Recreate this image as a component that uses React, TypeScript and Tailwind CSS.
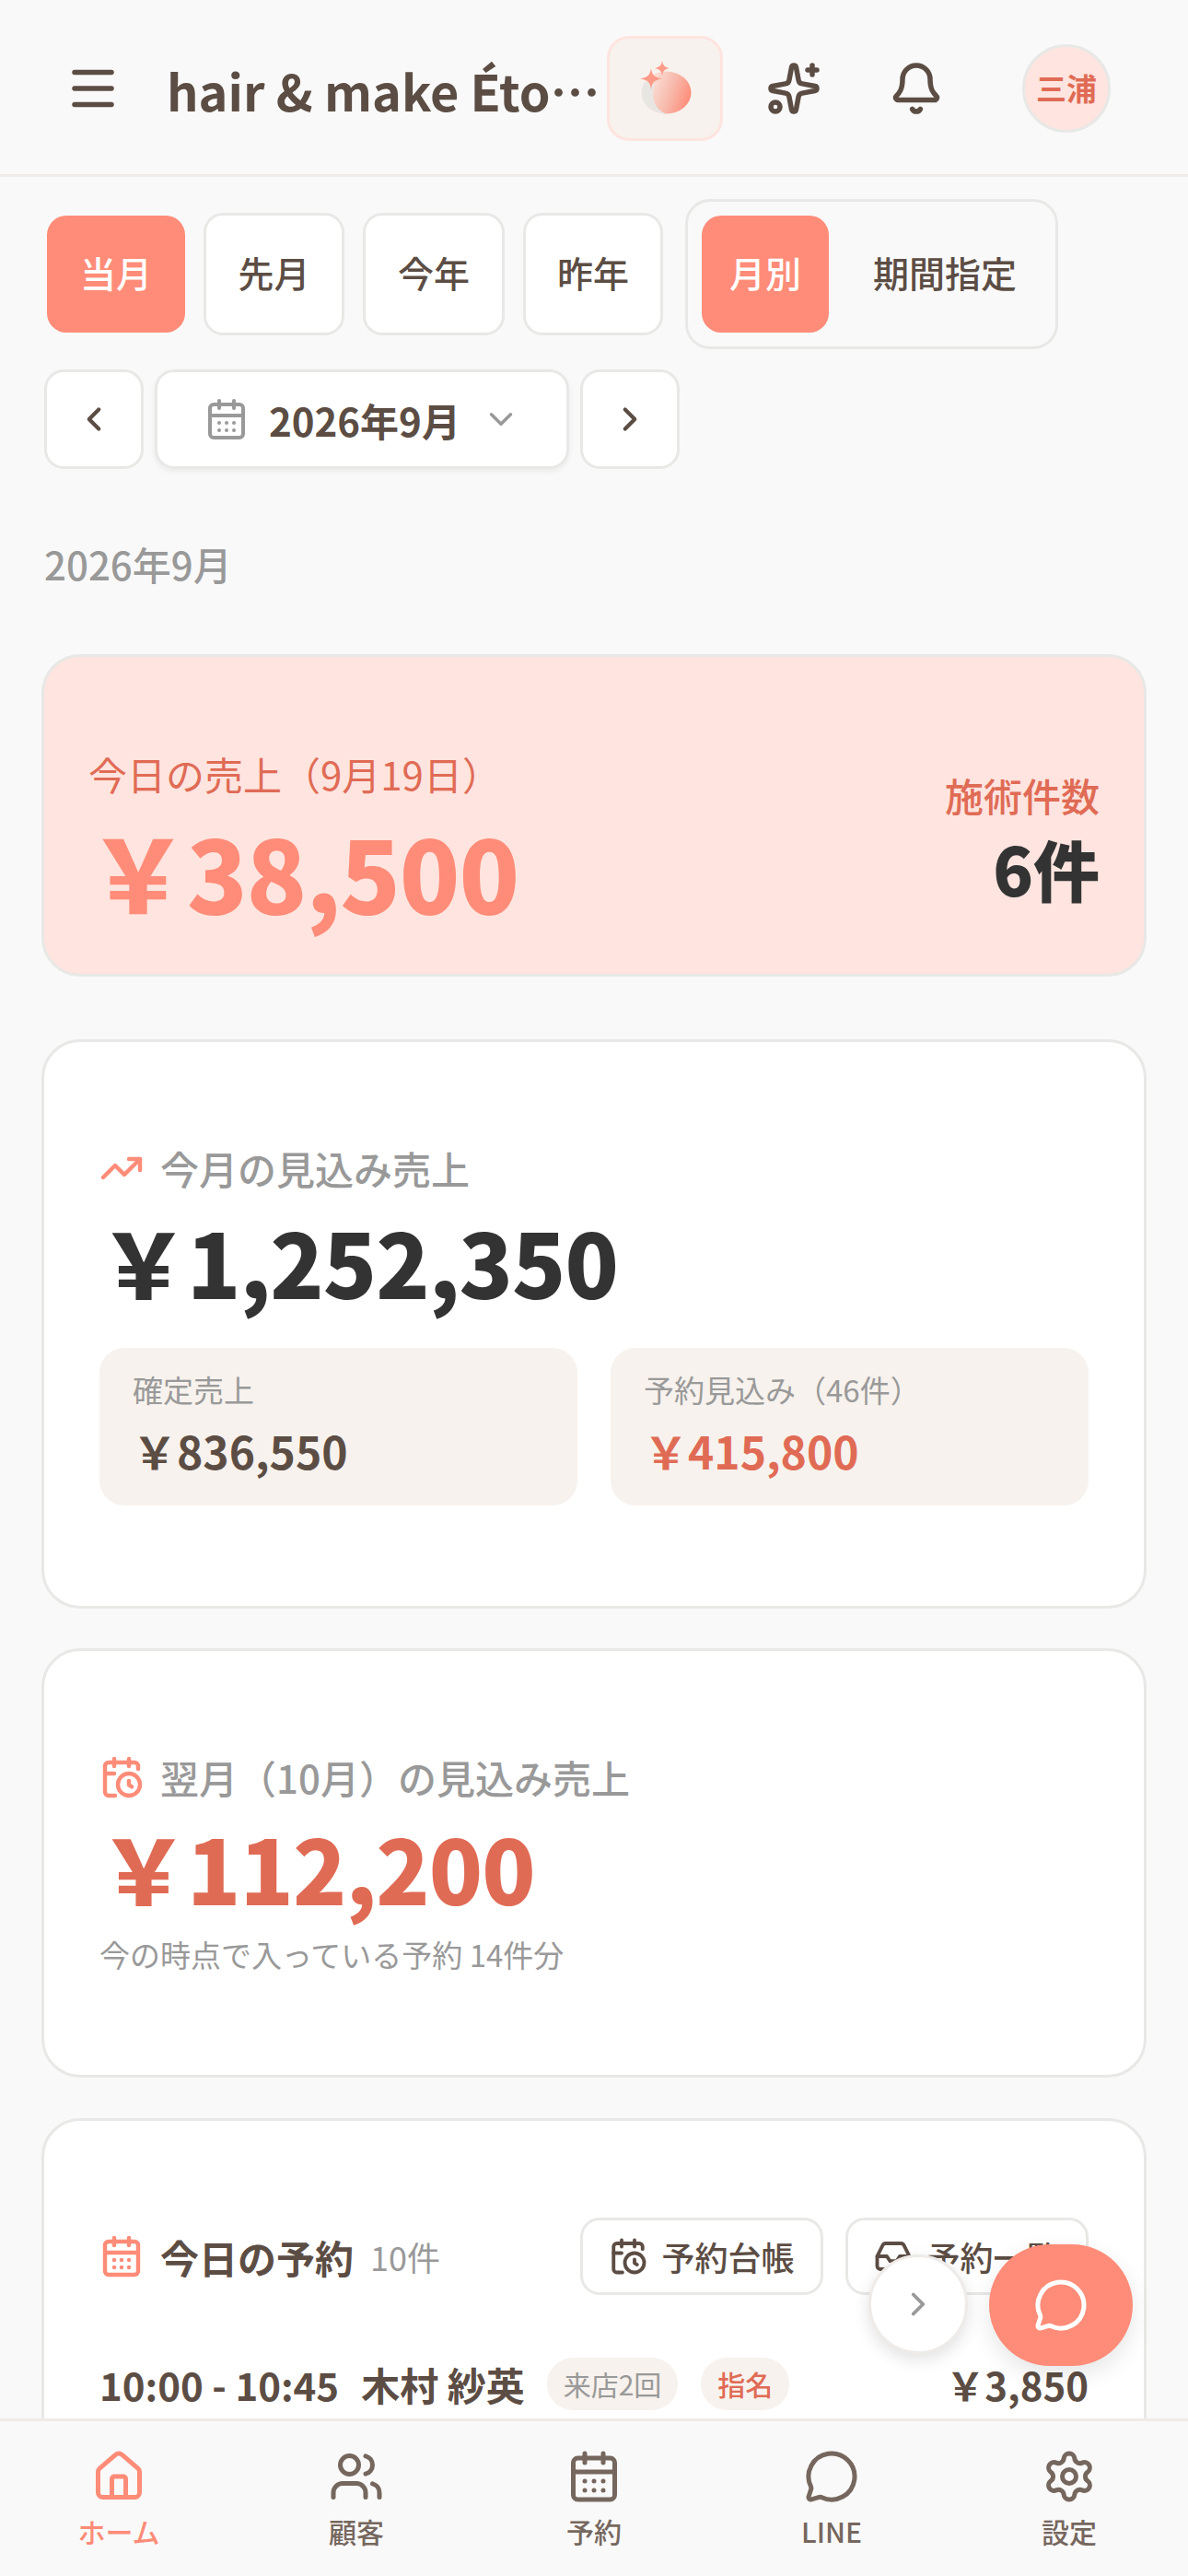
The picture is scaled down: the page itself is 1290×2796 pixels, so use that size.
import { Bell, CalendarClock, CalendarDays, ChevronDown, ChevronLeft, ChevronRight, House, Inbox, Menu, MessageCircle, Settings, Sparkles, TrendingUp, Users } from "lucide-react";

const FONT = "font-['Noto_Sans_CJK_JP','Noto_Sans',sans-serif]";

const quickRanges = [
  { label: "当月", active: true, width: "w-[150px]" },
  { label: "先月", active: false, width: "w-[153px]" },
  { label: "今年", active: false, width: "w-[154px]" },
  { label: "昨年", active: false, width: "w-[152px]" },
];

const navItems = [
  { label: "ホーム", icon: House, active: true },
  { label: "顧客", icon: Users, active: false },
  { label: "予約", icon: CalendarDays, active: false },
  { label: "LINE", icon: MessageCircle, active: false },
  { label: "設定", icon: Settings, active: false },
];

function PeachLogo() {
  return (
    <svg width="60" height="60" viewBox="0 0 60 60">
      <defs>
        <linearGradient id="peach" x1="0" y1="0.3" x2="1" y2="0.6">
          <stop offset="0" stopColor="#fdeee8" />
          <stop offset="0.6" stopColor="#f7b9ab" />
          <stop offset="1" stopColor="#ff8c78" />
        </linearGradient>
      </defs>
      <ellipse cx="31.5" cy="34.5" rx="27" ry="23" fill="url(#peach)" />
      <path d="M9 22a27 23 0 0 0 22.5 35.5C19 53 14 40 19 26z" fill="#e8e6e3" />
      <path d="M15 8c1 7 3 10 12 11.5-9 1.500-11 4-12 12-1-8-3-10.500-12-12 9-1.500 11-4.500 12-11.500z" fill="#ff9a88" />
      <path d="M27 0c1 5 2 6.500 8 8-6 1.500-7 3-8 8-1-5-2-6.500-8-8 6-1.500 7-3 8-8z" fill="#ff9a88" />
    </svg>
  );
}

export default function App() {
  return (
    <div className={`${FONT} relative flex h-[2796px] w-[1290px] flex-col overflow-hidden bg-[#f9f9f9] text-[#5c4d44]`}>
      <header className="flex h-[192px] shrink-0 items-center border-b-[3px] border-[#eeebe8] pt-[2px] pl-[72px]">
        <Menu size={60} strokeWidth={2.2} className="-ml-[1px] shrink-0" />
        <span className="mt-[4px] ml-[50px] w-[472px] truncate text-[54px] leading-[66px] font-bold">hair &amp; make Étoile Salon</span>
        <button className="ml-[6px] flex h-[114px] w-[126px] shrink-0 items-center justify-center rounded-[24px] border-[3px] border-[#ffe4df] bg-[#f7f2ed]">
          <PeachLogo />
        </button>
        <Sparkles size={60} strokeWidth={2.2} className="ml-[47px] shrink-0" />
        <Bell size={60} strokeWidth={2.2} className="ml-[73px] shrink-0" />
        <div className="ml-[85px] flex h-[96px] w-[96px] shrink-0 items-center justify-center rounded-full border-[3px] border-[#e8e8e6] bg-[#ffe4df] text-[33px] font-bold text-[#e06b55]">
          三浦
        </div>
      </header>

      <main className="min-h-0 flex-1 overflow-hidden px-[45px]">
        <div className="mt-[24px] flex items-center">
          <div className="flex items-center gap-[20px] pl-[6px]">
            {quickRanges.map((r) =>
              r.active ? (
                <button key={r.label} className={`flex h-[127px] ${r.width} items-center justify-center rounded-[21px] bg-[#ff8c78] pb-[4px] text-[39px] font-medium text-white`}>
                  {r.label}
                </button>
              ) : (
                <button key={r.label} className={`flex h-[133px] ${r.width} items-center justify-center rounded-[21px] border-[3px] border-[#e8e8e6] bg-white pb-[4px] text-[39px] font-medium`}>
                  {r.label}
                </button>
              ),
            )}
          </div>
          <div className="ml-[24px] flex h-[163px] w-[405px] items-center rounded-[27px] border-[3px] border-[#e8e8e6] pl-[15px]">
            <button className="flex h-[127px] w-[138px] items-center justify-center rounded-[21px] bg-[#ff8c78] pb-[4px] text-[39px] font-medium text-white">月別</button>
            <span className="-mt-[4px] ml-[48px] text-[39px] font-medium">期間指定</span>
          </div>
        </div>

        <div className="mt-[22px] flex items-center gap-[12px] pl-[3px]">
          <button className="flex h-[108px] w-[108px] items-center justify-center rounded-[21px] border-[3px] border-[#e8e8e6] bg-white">
            <ChevronLeft size={42} strokeWidth={2.4} />
          </button>
          <button className="flex h-[108px] w-[450px] items-center rounded-[21px] border-[3px] border-[#e8e8e6] bg-white pl-[51px] shadow-[0_3px_6px_rgba(0,0,0,0.06)]">
            <CalendarDays size={48} strokeWidth={2} className="text-[#999999]" />
            <span className="ml-[22px] text-[42px] font-bold">2026年9月</span>
            <ChevronDown size={42} strokeWidth={2} className="ml-[23px] text-[#999999]" />
          </button>
          <button className="flex h-[108px] w-[108px] items-center justify-center rounded-[21px] border-[3px] border-[#e8e8e6] bg-white">
            <ChevronRight size={42} strokeWidth={2.4} />
          </button>
        </div>

        <p className="mt-[73px] pl-[3px] text-[42px] leading-[60px] font-medium text-[#999999]">2026年9月</p>

        <section className="mt-[68px] flex h-[350px] items-center justify-between rounded-[42px] border-[3px] border-[#e8e8e6] bg-[#ffe4df] px-[48px] pt-[45px]">
          <div>
            <p className="text-[42px] leading-[60px] text-[#e06b55]">今日の売上（9月19日）</p>
            <p className="mt-[15px] text-[108px] leading-[120px] font-black tracking-[-0.01em] text-[#ff8c78]">￥38,500</p>
          </div>
          <div className="mt-[2px] text-right">
            <p className="text-[42px] leading-[60px] font-medium text-[#e06b55]">施術件数</p>
            <p className="mt-[7px] text-[72px] leading-[84px] font-black text-[#333333]">6件</p>
          </div>
        </section>

        <section className="mt-[68px] h-[618px] rounded-[42px] border-[3px] border-[#e8e8e6] bg-white px-[60px] pt-[107px]">
          <div className="flex items-center gap-[18px]">
            <TrendingUp size={48} strokeWidth={2.2} className="text-[#ff8c78]" />
            <p className="text-[42px] leading-[60px] font-medium text-[#999999]">今月の見込み売上</p>
          </div>
          <p className="mt-[17px] text-[96px] leading-[108px] font-black tracking-[-0.01em] text-[#333333]">￥1,252,350</p>
          <div className="mt-[40px] grid grid-cols-2 gap-[36px]">
            <div className="h-[171px] rounded-[27px] bg-[#f7f2ed] px-[36px] pt-[21px]">
              <p className="text-[33px] leading-[48px] text-[#999999]">確定売上</p>
              <p className="mt-[12px] text-[48px] leading-[60px] font-bold">￥836,550</p>
            </div>
            <div className="h-[171px] rounded-[27px] bg-[#f7f2ed] px-[36px] pt-[21px]">
              <p className="text-[33px] leading-[48px] text-[#999999]">予約見込み（46件）</p>
              <p className="mt-[12px] text-[48px] leading-[60px] font-bold text-[#e06b55]">￥415,800</p>
            </div>
          </div>
        </section>

        <section className="mt-[43px] h-[466px] rounded-[42px] border-[3px] border-[#e8e8e6] bg-white px-[60px] pt-[107px]">
          <div className="flex items-center gap-[18px]">
            <CalendarClock size={48} strokeWidth={2.2} className="text-[#ff8c78]" />
            <p className="text-[42px] leading-[60px] font-medium text-[#999999]">翌月（10月）の見込み売上</p>
          </div>
          <p className="mt-[14px] text-[96px] leading-[108px] font-black tracking-[-0.01em] text-[#e06b55]">￥112,200</p>
          <p className="mt-[16px] text-[33px] leading-[48px] text-[#999999]">今の時点で入っている予約 14件分</p>
        </section>

        <section className="mt-[44px] rounded-t-[42px] border-[3px] border-[#e8e8e6] bg-white px-[60px] pt-[105px] pb-[200px]">
          <div className="flex items-center">
            <CalendarDays size={48} strokeWidth={2.2} className="text-[#ff8c78]" />
            <h2 className="ml-[18px] text-[42px] font-bold">今日の予約</h2>
            <span className="ml-[18px] text-[36px] text-[#999999]">10件</span>
            <button className="ml-auto flex h-[84px] w-[264px] items-center justify-center gap-[15px] rounded-[21px] border-[3px] border-[#e8e8e6] text-[36px] font-medium">
              <CalendarClock size={42} strokeWidth={2.2} />
              予約台帳
            </button>
            <button className="ml-[24px] flex h-[84px] w-[264px] items-center justify-center gap-[15px] rounded-[21px] border-[3px] border-[#e8e8e6] text-[36px] font-medium">
              <Inbox size={42} strokeWidth={2.2} />
              予約一覧
            </button>
          </div>
          <div className="mt-[65px] flex items-center">
            <span className="text-[42px] font-bold">10:00 - 10:45</span>
            <span className="ml-[24px] text-[42px] font-bold">木村 紗英</span>
            <span className="ml-[24px] rounded-full bg-[#f7f2ed] px-[18px] py-[6px] text-[30px] text-[#999999]">来店2回</span>
            <span className="ml-[25px] rounded-full bg-[#f7f2ed] px-[18px] py-[6px] text-[30px] font-medium text-[#e06b55]">指名</span>
            <span className="ml-auto text-[42px] font-bold">￥3,850</span>
          </div>
        </section>
      </main>

      <button className="absolute right-[239px] bottom-[241px] flex h-[108px] w-[108px] items-center justify-center rounded-full border-[3px] border-[#eeebe8] bg-white text-[#999999] shadow-[0_6px_18px_rgba(0,0,0,0.12)]">
        <ChevronRight size={42} strokeWidth={2.2} />
      </button>
      <button className="absolute right-[60px] bottom-[228px] flex h-[132px] w-[156px] items-center justify-center rounded-full bg-[#ff8c78] text-white shadow-[0_9px_24px_rgba(0,0,0,0.1)]">
        <MessageCircle size={60} strokeWidth={2} />
      </button>

      <nav className="grid h-[171px] shrink-0 grid-cols-5 border-t-[3px] border-[#eeebe8] bg-[#f9f9f9] pt-[30px]">
        {navItems.map((item) => {
          const Icon = item.icon;
          return (
            <div key={item.label} className={`flex flex-col items-center ${item.active ? "text-[#ff8c78]" : "text-[#76675e]"}`}>
              <Icon size={60} strokeWidth={2} />
              <span className="mt-[8px] text-[30px] leading-[42px] font-medium">{item.label}</span>
            </div>
          );
        })}
      </nav>
    </div>
  );
}
